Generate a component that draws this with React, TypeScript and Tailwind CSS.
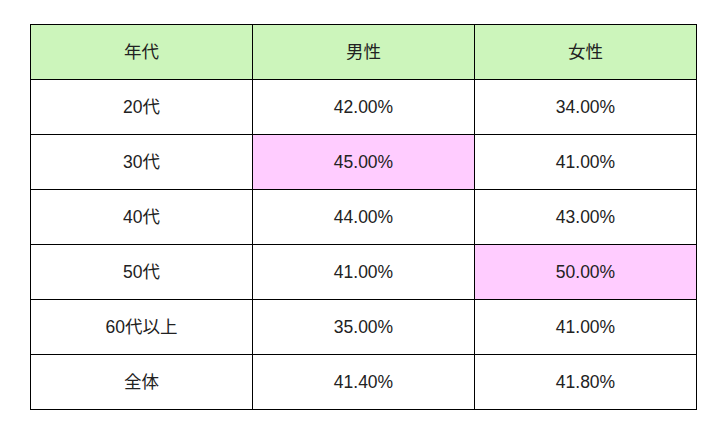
import React from "react";

const rows: { cells: string[]; pink?: number }[] = [
  { cells: ["20代", "42.00%", "34.00%"] },
  { cells: ["30代", "45.00%", "41.00%"], pink: 1 },
  { cells: ["40代", "44.00%", "43.00%"] },
  { cells: ["50代", "41.00%", "50.00%"], pink: 2 },
  { cells: ["60代以上", "35.00%", "41.00%"] },
  { cells: ["全体", "41.40%", "41.80%"] },
];

export default function App() {
  return (
    <div className="w-[723px] h-[437px] bg-white pl-[30px] pt-[24px]" style={{ fontFamily: '"Liberation Sans", "Noto Sans CJK JP", sans-serif' }}>
      <div className="grid grid-cols-[222px_222px_222px] w-[667px] border-r border-b border-black text-[17.5px] text-[#222222]">
        {["年代", "男性", "女性"].map((h) => (
          <div key={h} className="h-[55px] border-l border-t border-black bg-[#ccf5bb] flex items-center justify-center">
            {h}
          </div>
        ))}
        {rows.map((r, i) =>
          r.cells.map((c, j) => (
            <div
              key={`${i}-${j}`}
              className={`h-[55px] border-l border-t border-black flex items-center justify-center ${r.pink === j ? "bg-[#ffccff]" : "bg-white"}`}
            >
              {c}
            </div>
          ))
        )}
      </div>
    </div>
  );
}
